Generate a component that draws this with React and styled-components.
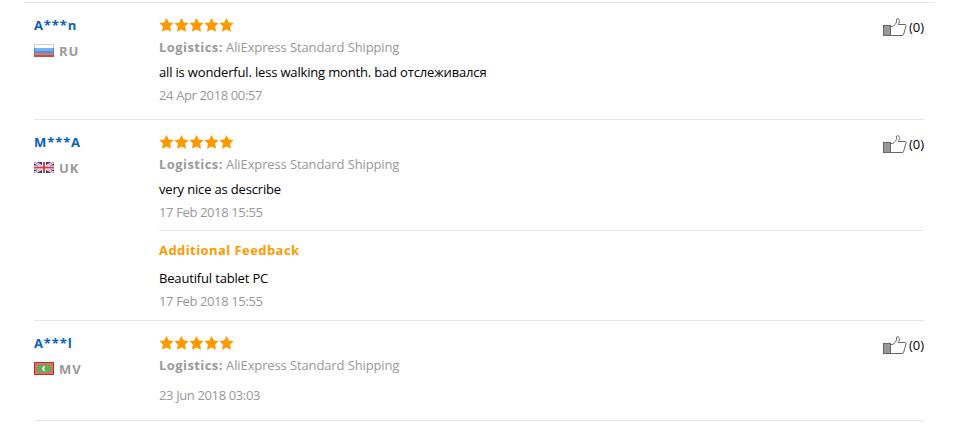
import React from "react";
import styled, { createGlobalStyle } from "styled-components";

const GlobalStyle = createGlobalStyle`
  body {
    margin: 0;
    background: #fff;
    color: #000;
    font-family: "Open Sans", "Noto Sans", sans-serif;
    font-size: 13px;
    line-height: 20px;
  }
`;

const List = styled.div`
  margin: 2px 24px 0;
  padding: 0 10px;
  border-top: 1px solid #e6e6e6;
`;

const Item = styled.div`
  display: flex;
  box-sizing: border-box;
  height: ${props => props.$height}px;
  padding-top: 12px;
  border-bottom: 1px solid #e6e6e6;
`;

const User = styled.div`
  width: 125px;
  flex-shrink: 0;
`;

const Name = styled.div`
  color: #0660bc;
  font-weight: 700;
  letter-spacing: 0.9px;
`;

const Country = styled.div`
  display: flex;
  align-items: center;
  margin-top: 6px;
  color: #999;
  font-weight: 700;
  letter-spacing: 0.9px;
  svg {
    margin: 0 5px 1px 0;
  }
`;

const Main = styled.div`
  position: relative;
  flex: 1;
`;

const Stars = styled.div`
  display: flex;
  align-items: center;
  height: 20px;
`;

const Logistics = styled.div`
  margin-top: 2px;
  color: #999;
  letter-spacing: -0.12px;
  b {
    font-weight: 700;
    letter-spacing: 0.42px;
  }
`;

const Comment = styled.div`
  margin-top: ${props => props.$gap}px;
  letter-spacing: -0.165px;
`;

const Posted = styled.div`
  margin-top: ${props => props.$gap || 3}px;
  color: #999;
  letter-spacing: -0.37px;
`;

const Additional = styled.div`
  margin-top: 8px;
  padding-top: 9px;
  border-top: 1px solid #e6e6e6;
`;

const AdditionalTitle = styled.div`
  color: #f90;
  font-weight: 700;
  letter-spacing: 0.43px;
`;

const Useful = styled.div`
  position: absolute;
  top: 2px;
  right: 0;
  display: flex;
  svg {
    margin: 1px 2px 0 0;
  }
`;

const Star = () => (
  <svg width="15" height="14" viewBox="0 0 15 14">
    <path
      fill="#f90"
      d="M7.5 0 L9.8 4.5 L14.6 5.1 L11.1 8.6 L12 13.8 L7.5 11.4 L3 13.8 L3.9 8.6 L0.4 5.1 L5.2 4.5Z"
    />
  </svg>
);

const Thumb = () => (
  <svg width="24" height="20" viewBox="0 0 24 20" fill="none" stroke="#666">
    <rect x="0.5" y="7.5" width="7" height="10" fill="#999" />
    <path d="M7.5 8.5 H9.5 C11.5 7.3 13.5 5.5 13.5 3.5 V1.2 C14.5 0.3 16.2 0.5 16.4 2.5 C16.5 4.3 15.8 5.8 15.2 6.5 H22 C22.9 6.5 23.2 7 23 7.8 L20.7 16.2 C20.5 17.1 20 17.5 19.2 17.5 H7.5" />
  </svg>
);

const Flag = ({ country }) => (
  <svg width="20" height="13" viewBox="0 0 20 13">
    {country === "RU" && (
      <>
        <rect width="20" height="13" fill="#d0d0d0" />
        <rect x="1" y="1" width="18" height="3" fill="#fff" />
        <rect y="4" width="20" height="5" fill="#4d8fe0" />
        <rect x="1" y="4" width="18" height="3" fill="#75b2f2" />
        <rect y="9" width="20" height="4" fill="#b75353" />
        <rect x="1" y="9" width="18" height="2" fill="#d5796f" />
      </>
    )}
    {country === "UK" && (
      <>
        <rect y="1" width="20" height="11" fill="#343a80" />
        <path d="M0 1 L20 12 M20 1 L0 12" stroke="#fff" strokeWidth="2.4" />
        <path d="M0 1 L20 12 M20 1 L0 12" stroke="#d45468" strokeWidth="0.8" />
        <path d="M10 1 V12 M0 6.5 H20" stroke="#fff" strokeWidth="4" />
        <path d="M10 1 V12 M0 6.5 H20" stroke="#d4404d" strokeWidth="2" />
      </>
    )}
    {country === "MV" && (
      <>
        <rect width="20" height="13" fill="#b83233" />
        <rect x="1" y="1" width="18" height="11" fill="#e66b62" />
        <rect x="3" y="3" width="14" height="7" fill="#55b456" />
        <path d="M11.5 4 A2.6 2.6 0 1 0 11.5 9 A3 3 0 0 1 11.5 4Z" fill="#fff" />
      </>
    )}
  </svg>
);

const feedback = [
  {
    name: "A***n",
    country: "RU",
    text: "all is wonderful. less walking month. bad отслеживался",
    date: "24 Apr 2018 00:57",
    height: 117
  },
  {
    name: "M***A",
    country: "UK",
    text: "very nice as describe",
    date: "17 Feb 2018 15:55",
    additional: { text: "Beautiful tablet PC", date: "17 Feb 2018 15:55" },
    height: 201
  },
  {
    name: "A***l",
    country: "MV",
    date: "23 Jun 2018 03:03",
    height: 100
  }
];

function FeedbackItem({ item }) {
  return (
    <Item $height={item.height}>
      <User>
        <Name>{item.name}</Name>
        <Country>
          <Flag country={item.country} />
          {item.country}
        </Country>
      </User>
      <Main>
        <Stars>
          {[1, 2, 3, 4, 5].map(star => (
            <Star key={star} />
          ))}
        </Stars>
        <Logistics>
          <b>Logistics:</b> AliExpress Standard Shipping
        </Logistics>
        {item.text && <Comment $gap={5}>{item.text}</Comment>}
        <Posted $gap={item.text ? 3 : 10}>{item.date}</Posted>
        {item.additional && (
          <Additional>
            <AdditionalTitle>Additional Feedback</AdditionalTitle>
            <Comment $gap={8}>{item.additional.text}</Comment>
            <Posted>{item.additional.date}</Posted>
          </Additional>
        )}
        <Useful>
          <Thumb />
          <span>(0)</span>
        </Useful>
      </Main>
    </Item>
  );
}

function App() {
  return (
    <>
      <GlobalStyle />
      <List>
        {feedback.map(item => (
          <FeedbackItem key={item.name} item={item} />
        ))}
      </List>
    </>
  );
}

export default App;
